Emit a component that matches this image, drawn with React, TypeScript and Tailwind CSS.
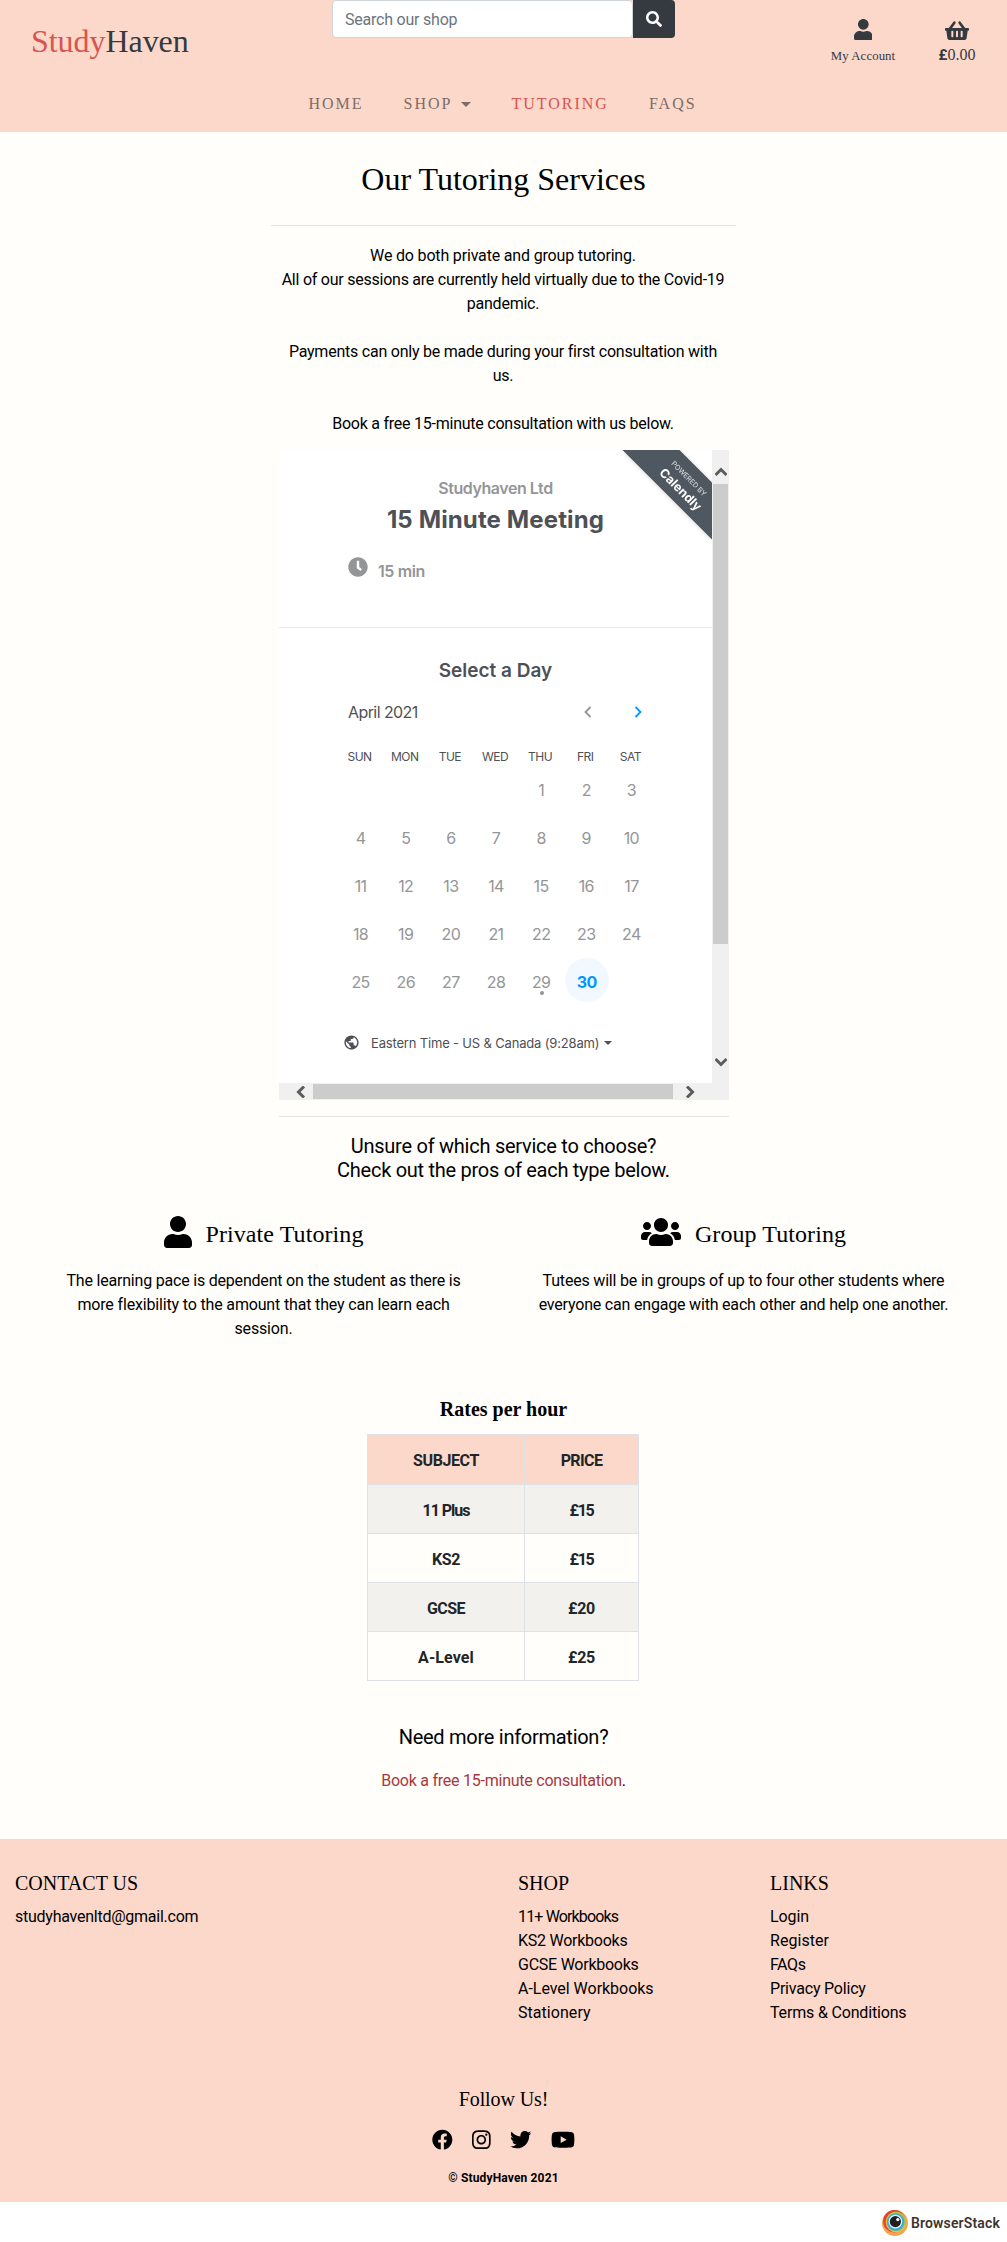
import {
  FaUser,
  FaUsers,
  FaSearch,
  FaShoppingBasket,
  FaFacebook,
  FaInstagram,
  FaTwitter,
  FaYoutube,
  FaClock,
} from "react-icons/fa";
import { MdPublic } from "react-icons/md";

function Header() {
  return (
    <header className="flex h-[132px] flex-col bg-[#fcd8cb] font-['Liberation_Serif',serif]">
      <div className="flex h-[92px] items-start text-[#343a40]">
        <a className="ml-[31px] mt-[22px] w-[301px] text-[32px] leading-[38px] tracking-[-0.05px]">
          <span className="text-[#d9534f]">Study</span>Haven
        </a>
        <div className="flex h-[38px] w-[343px] font-[Roboto,sans-serif]">
          <div className="flex w-[301px] items-center rounded-[4px] border border-[#ced4da] bg-white pl-3 pt-px text-[16px] tracking-[-0.22px] text-[#6c757d]">
            Search our shop
          </div>
          <button className="flex w-[42px] items-center justify-center rounded-r-[4px] bg-[#343a40] text-white">
            <FaSearch className="size-4" />
          </button>
        </div>
        <a className="ml-[146px] flex w-[84px] flex-col items-center pt-[19px]">
          <FaUser className="h-[21.33px] w-[18.67px]" />
          <span className="mt-[7px] text-[12.8px] leading-[19px] tracking-[0.09px]">My Account</span>
        </a>
        <a className="ml-[12px] flex w-[80px] flex-col items-center pt-[20px]">
          <FaShoppingBasket className="h-[21.33px] w-6" />
          <span className="mt-[1.67px] text-[16px] leading-6">
            <b className="font-[Roboto,sans-serif] text-[15px]">£</b>0.00
          </span>
        </a>
      </div>
      <nav className="mr-[2px] flex justify-center gap-10 text-[16px] leading-6 tracking-[2px] text-[#7e6c66]">
        <a>HOME</a>
        <a className="flex items-center">
          SHOP
          <span className="ml-[9px] border-x-[5px] border-t-[5px] border-x-transparent border-t-[#7e6c66]" />
        </a>
        <a className="text-[#d9534f]">TUTORING</a>
        <a>FAQS</a>
      </nav>
    </header>
  );
}

const WEEKDAYS = ["SUN", "MON", "TUE", "WED", "THU", "FRI", "SAT"];
const LEADING_BLANKS = 4;

function Day({ day }: { day: number }) {
  if (day < 1) return <div className="h-11" />;
  if (day === 30) {
    return (
      <div className="flex h-11 items-center justify-center">
        <span className="-mr-px flex size-11 items-center justify-center rounded-full bg-[#f2f8ff] pt-[3px] text-[16px] font-bold tracking-[-0.5px] text-[#0099ff]">
          30
        </span>
      </div>
    );
  }
  return (
    <div className="relative flex h-11 items-center justify-center pt-[3px]">
      {day}
      {day === 29 && <span className="absolute left-[21px] top-[33px] size-1 rounded-full bg-[#949597]" />}
    </div>
  );
}

function Arrow({ className, points }: { className: string; points: string }) {
  return (
    <svg viewBox="0 0 12 12" className={className} fill="none" stroke="#5c5c5c" strokeWidth="3">
      <polyline points={points} />
    </svg>
  );
}

function Scheduler() {
  return (
    <div className="grid h-[650px] w-[450px] grid-cols-[433px_17px] grid-rows-[633px_17px] bg-[#f0f0f0] font-[Inter,sans-serif] text-[#4d5055]">
      <div className="relative overflow-hidden bg-white">
        <div className="h-[178px] border-b border-[#e8e8e9] pt-[26px] text-center font-bold">
          <div className="text-[16px] font-semibold leading-6 tracking-[-0.45px] text-[#949597]">Studyhaven Ltd</div>
          <div className="mt-[4px] text-[24px] leading-8 tracking-[0.13px]">15 Minute Meeting</div>
          <div className="mt-[21px] flex items-start pl-[69px] text-[#949597]">
            <FaClock className="size-5" />
            <span className="ml-[10px] mt-[2px] text-[16px] font-semibold leading-6 tracking-[-0.4px]">15 min</span>
          </div>
        </div>
        <div className="pt-[30px] text-center text-[19px] font-semibold leading-[26px]">
          Select a Day
        </div>
        <div className="mt-[16px] flex h-6 items-center pl-[69px]">
          <span className="w-[236px] text-left text-[16px] tracking-[-0.58px]">April 2021</span>
          <svg viewBox="0 0 8 12" className="h-3 w-2" fill="none" stroke="#949597" strokeWidth="1.8">
            <polyline points="6.5,1 1.5,6 6.5,11" />
          </svg>
          <svg viewBox="0 0 8 12" className="ml-[42px] h-3 w-2" fill="none" stroke="#0099ff" strokeWidth="1.8">
            <polyline points="1.5,1 6.5,6 1.5,11" />
          </svg>
        </div>
        <div className="ml-[58px] mt-[25px] grid w-[316px] grid-cols-7 text-center text-[12px] leading-4 tracking-[-0.5px]">
          {WEEKDAYS.map((d) => (
            <span key={d}>{d}</span>
          ))}
        </div>
        <div className="ml-[59px] mt-px grid w-[316px] grid-cols-7 gap-y-1 text-[16px] tracking-[-0.6px] text-[#949597]">
          {Array.from({ length: 34 }, (_, i) => i - LEADING_BLANKS + 1).map((d) => (
            <Day key={d} day={d} />
          ))}
        </div>
        <div className="mt-[31px] flex h-5 items-center pl-[64px] text-[13px] tracking-[-0.17px]">
          <MdPublic className="-mt-px size-[17px]" />
          <span className="ml-[11px]">Eastern Time - US &amp; Canada (9:28am)</span>
          <span className="ml-[5px] border-x-4 border-t-4 border-x-transparent border-t-[#4d5055]" />
        </div>
        <svg viewBox="0 0 92 92" className="absolute right-0 top-0 size-[92px] drop-shadow-sm">
          <polygon points="2.5,0 59.5,0 92,32.5 92,89.5" fill="#4f5860" />
          <g fill="#fff" textAnchor="middle" fontFamily="Inter, sans-serif">
            <text transform="translate(67.2,30.3) rotate(45)" fontSize="7" fillOpacity="0.8">
              POWERED BY
            </text>
            <text transform="translate(57.5,42.5) rotate(45)" fontSize="12.5" fontWeight="700">
              Calendly
            </text>
          </g>
        </svg>
      </div>
      <div className="flex flex-col items-center pt-4">
        <Arrow className="size-3" points="0.5,9 6,3.5 11.5,9" />
        <div className="mt-[6px] h-[460px] w-[15px] bg-[#cccccc]" />
        <Arrow className="mt-[112px] size-3" points="0.5,3 6,8.5 11.5,3" />
      </div>
      <div className="flex items-center pl-4">
        <Arrow className="size-3" points="9,0.5 3.5,6 9,11.5" />
        <div className="ml-[6px] h-[15px] w-[360px] bg-[#cccccc]" />
        <Arrow className="ml-[11px] size-3" points="3,0.5 8.5,6 3,11.5" />
      </div>
      <div />
    </div>
  );
}

const RATES = [
  { subject: "11 Plus", price: "£15", subjectClass: "tracking-[-1px]", priceClass: "tracking-[-1.3px]" },
  { subject: "KS2", price: "£15", subjectClass: "tracking-[-0.4px]", priceClass: "tracking-[-1.3px]" },
  { subject: "GCSE", price: "£20", subjectClass: "tracking-[-0.5px]", priceClass: "tracking-[-0.3px]" },
  { subject: "A-Level", price: "£25", subjectClass: "tracking-[0.1px]", priceClass: "tracking-[-0.3px]" },
];

function RatesTable() {
  return (
    <div className="-ml-px mt-[13px] w-[272px] border border-[#dee2e6] text-center text-[16px] font-bold text-[#212529]">
      <div className="flex h-[50px] border-b-2 border-[#dee2e6] bg-[#fcd8cb] leading-[52px]">
        <div className="w-[157px] border-r border-[#dee2e6] tracking-[-0.4px]">SUBJECT</div>
        <div className="flex-1 tracking-[-0.6px]">PRICE</div>
      </div>
      {RATES.map((r) => (
        <div
          key={r.subject}
          className="flex h-[49px] border-b border-[#dee2e6] leading-[52px] last:h-12 last:border-b-0 odd:bg-[#fffefa] even:bg-[#f2f1ee]"
        >
          <div className="w-[157px] border-r border-[#dee2e6]">
            <span className={r.subjectClass}>{r.subject}</span>
          </div>
          <div className="flex-1">
            <span className={r.priceClass}>{r.price}</span>
          </div>
        </div>
      ))}
    </div>
  );
}

const INTRO = [
  { text: "We do both private and group tutoring.", className: "tracking-[-0.17px]" },
  { text: "All of our sessions are currently held virtually due to the Covid-19", className: "tracking-[-0.24px]" },
  { text: "pandemic.", className: "mb-6 tracking-[-0.25px]" },
  { text: "Payments can only be made during your first consultation with", className: "tracking-[-0.23px]" },
  { text: "us.", className: "mb-6 tracking-[-0.3px]" },
  { text: "Book a free 15-minute consultation with us below.", className: "tracking-[-0.24px]" },
];

function Main() {
  return (
    <main className="flex h-[1707px] flex-col items-center bg-[#fffefa] text-center text-[16px] leading-6 text-black">
      <h2 className="mt-[28px] font-['Liberation_Serif',serif] text-[32px] leading-[38px]">Our Tutoring Services</h2>
      <div className="mt-[27px] h-px w-[465px] bg-[#e5e4e1]" />
      <div className="-ml-px mt-[18px] flex flex-col whitespace-nowrap">
        {INTRO.map((l) => (
          <span key={l.text} className={l.className}>
            {l.text}
          </span>
        ))}
      </div>
      <div className="ml-px mt-[14px]">
        <Scheduler />
      </div>
      <div className="ml-px mt-4 h-px w-[450px] bg-[#e5e4e1]" />
      <h5 className="mt-[17px] text-[20px] leading-6">
        <span className="tracking-[-0.25px]">Unsure of which service to choose?</span>
        <br />
        <span className="tracking-[-0.27px]">Check out the pros of each type below.</span>
      </h5>
      <div className="mt-[34px] flex whitespace-nowrap">
        <section className="w-[480px]">
          <div className="flex justify-center">
            <FaUser className="h-8 w-7" />
            <h4 className="ml-[14px] mt-[4px] h-[49px] font-['Liberation_Serif',serif] text-[24px] leading-[29px] tracking-[0.08px]">
              Private Tutoring
            </h4>
          </div>
          <p className="tracking-[-0.2px]">The learning pace is dependent on the student as there is</p>
          <p className="tracking-[-0.16px]">more flexibility to the amount that they can learn each</p>
          <p className="tracking-[-0.16px]">session.</p>
        </section>
        <section className="w-[480px]">
          <div className="flex justify-center">
            <FaUsers className="h-8 w-10" />
            <h4 className="ml-[14px] mt-[4px] h-[49px] font-['Liberation_Serif',serif] text-[24px] leading-[29px] tracking-[0.08px]">
              Group Tutoring
            </h4>
          </div>
          <p className="tracking-[-0.19px]">Tutees will be in groups of up to four other students where</p>
          <p className="tracking-[-0.19px]">everyone can engage with each other and help one another.</p>
        </section>
      </div>
      <h5 className="mt-[56px] font-['Liberation_Serif',serif] text-[20px] font-bold leading-6">Rates per hour</h5>
      <RatesTable />
      <h5 className="mt-[44px] text-[20px] leading-6 tracking-[-0.27px]">Need more information?</h5>
      <p className="mt-[20px] tracking-[-0.24px]">
        <a className="text-[#a9383e]">Book a free 15-minute consultation</a>.
      </p>
    </main>
  );
}

function FooterColumn({ title, items, className }: { title: string; items: [string, string][]; className: string }) {
  return (
    <div className={className}>
      <h5 className="font-['Liberation_Serif',serif] text-[20px] leading-6">{title}</h5>
      <ul className="mt-[10px] text-[16px] leading-6">
        {items.map(([label, tracking]) => (
          <li key={label} className={tracking}>
            {label}
          </li>
        ))}
      </ul>
    </div>
  );
}

function Footer() {
  return (
    <footer className="flex h-[363px] flex-col bg-[#fcd8cb] pt-8 text-black">
      <div className="flex h-[216px] pl-[15px]">
        <FooterColumn className="w-[503px]" title="CONTACT US" items={[["studyhavenltd@gmail.com", "tracking-[-0.25px]"]]} />
        <FooterColumn
          className="w-[252px]"
          title="SHOP"
          items={[
            ["11+ Workbooks", "tracking-[-0.85px]"],
            ["KS2 Workbooks", "tracking-[-0.25px]"],
            ["GCSE Workbooks", "tracking-[-0.25px]"],
            ["A-Level Workbooks", "tracking-[-0.03px]"],
            ["Stationery", "tracking-[0.05px]"],
          ]}
        />
        <FooterColumn
          className="w-[237px]"
          title="LINKS"
          items={[
            ["Login", "tracking-[-0.1px]"],
            ["Register", "tracking-[0.05px]"],
            ["FAQs", "tracking-[-0.4px]"],
            ["Privacy Policy", "tracking-[-0.2px]"],
            ["Terms & Conditions", "tracking-[-0.17px]"],
          ]}
        />
      </div>
      <h5 className="text-center font-['Liberation_Serif',serif] text-[20px] leading-6 tracking-[-0.1px]">Follow Us!</h5>
      <div className="mt-[18px] flex h-[21px] items-center justify-center gap-[19.5px]">
        <FaFacebook className="h-[21.33px] w-[20.67px]" />
        <FaInstagram className="h-[21.33px] w-[18.67px]" />
        <FaTwitter className="size-[21.33px]" />
        <FaYoutube className="h-[21.33px] w-6" />
      </div>
      <div className="mt-[19px] text-center text-[12px] font-bold leading-[18px] tracking-[0.15px]">© StudyHaven 2021</div>
    </footer>
  );
}

const RINGS = [
  { cx: 13, cy: 13, r: 13, fill: "#f2a54e" },
  { cx: 12.4, cy: 11.2, r: 11.2, fill: "#e4432f" },
  { cx: 14, cy: 12, r: 10.3, fill: "#f3c43c" },
  { cx: 14.4, cy: 11.7, r: 9.6, fill: "#a3c94a" },
  { cx: 13.6, cy: 12, r: 8.8, fill: "#3fa9d8" },
  { cx: 13.4, cy: 11.6, r: 6.8, fill: "#e9f5fa" },
  { cx: 13.4, cy: 11.6, r: 5.6, fill: "#221f1f" },
  { cx: 15.8, cy: 9.6, r: 1.6, fill: "#ffffff" },
];

function PoweredBar() {
  return (
    <div className="flex h-10 items-start justify-end bg-white pr-[7px] pt-2">
      <svg viewBox="0 0 26 26" className="size-[26px]">
        {RINGS.map((c, i) => (
          <circle key={i} {...c} />
        ))}
      </svg>
      <span className="ml-[3px] mt-[3px] font-[Roboto,sans-serif] text-[14px] font-semibold leading-5 tracking-[0.15px] text-[#3d3430]">
        BrowserStack
      </span>
    </div>
  );
}

export default function App() {
  return (
    <div className="w-[1007px] font-[Roboto,sans-serif]">
      <Header />
      <Main />
      <Footer />
      <PoweredBar />
    </div>
  );
}
